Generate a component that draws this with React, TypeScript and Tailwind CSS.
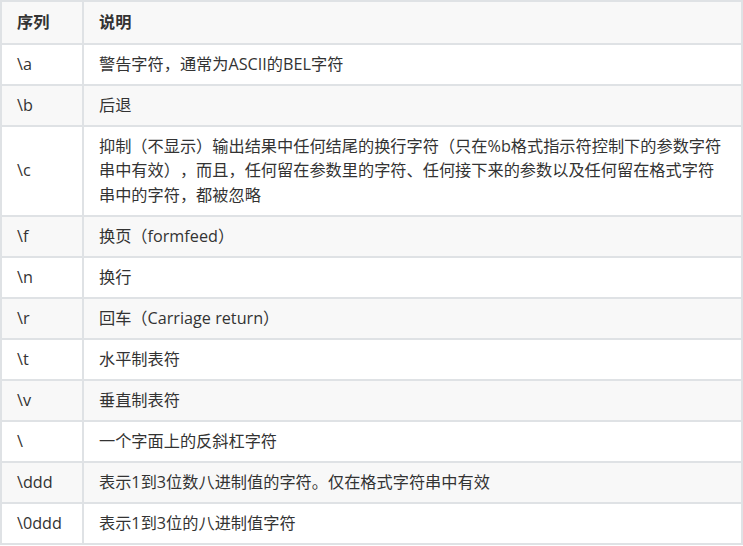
const rows: [string, string][] = [
  ['\\a', '警告字符，通常为ASCII的BEL字符'],
  ['\\b', '后退'],
  ['\\c', '抑制（不显示）输出结果中任何结尾的换行字符（只在%b格式指示符控制下的参数字符串中有效），而且，任何留在参数里的字符、任何接下来的参数以及任何留在格式字符串中的字符，都被忽略'],
  ['\\f', '换页（formfeed）'],
  ['\\n', '换行'],
  ['\\r', '回车（Carriage return）'],
  ['\\t', '水平制表符'],
  ['\\v', '垂直制表符'],
  ['\\', '一个字面上的反斜杠字符'],
  ['\\ddd', '表示1到3位数八进制值的字符。仅在格式字符串中有效'],
  ['\\0ddd', '表示1到3位的八进制值字符'],
];

export default function App() {
  return (
    <div className="w-[743px] bg-white font-['Open_Sans','Noto_Sans_CJK_SC',sans-serif] text-[16.2px] leading-[24.5px] text-[#333] [text-spacing-trim:space-all]">
      <table className="w-full table-fixed border-collapse">
        <colgroup>
          <col className="w-[82px]" />
          <col />
        </colgroup>
        <thead>
          <tr className="bg-[#f8f8f8]">
            <th className="border-2 border-[#dfe2e5] px-[15px] py-[8px] text-left font-bold">序列</th>
            <th className="border-2 border-[#dfe2e5] px-[15px] py-[8px] text-left font-bold">说明</th>
          </tr>
        </thead>
        <tbody>
          {rows.map(([seq, desc], i) => (
            <tr key={seq} className={i % 2 === 1 ? 'bg-[#f8f8f8]' : 'bg-white'}>
              <td className="border-2 border-[#dfe2e5] px-[15px] py-[7.25px] align-middle">{seq}</td>
              <td className="border-2 border-[#dfe2e5] px-[15px] py-[7.25px] align-middle">{desc}</td>
            </tr>
          ))}
        </tbody>
      </table>
    </div>
  );
}
